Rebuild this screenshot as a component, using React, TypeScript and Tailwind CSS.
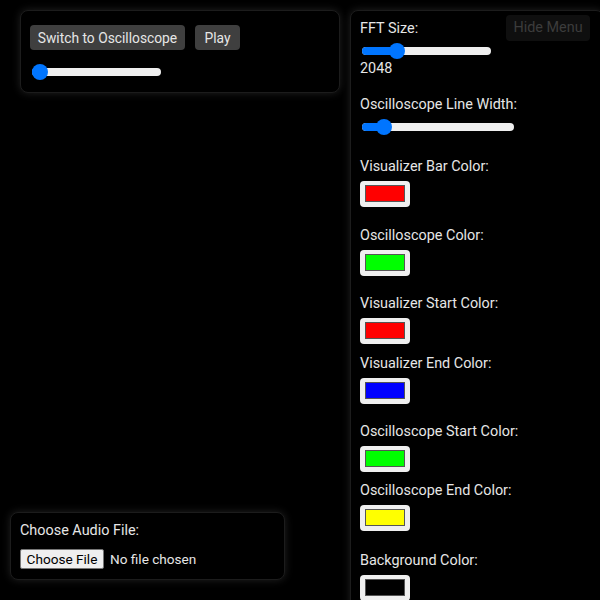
import React from "react";

const COLORS = [
  { label: "Visualizer Bar Color:", color: "#ff0000", gap: "mt-[22px]" },
  { label: "Oscilloscope Color:", color: "#00ff00", gap: "mt-[19px]" },
  { label: "Visualizer Start Color:", color: "#ff0000", gap: "mt-[18px]" },
  { label: "Visualizer End Color:", color: "#0000ff", gap: "mt-[10px]" },
  { label: "Oscilloscope Start Color:", color: "#00ff00", gap: "mt-[18px]" },
  { label: "Oscilloscope End Color:", color: "#ffff00", gap: "mt-[9px]" },
  { label: "Background Color:", color: "#000000", gap: "mt-[20px]" },
];

function Slider({ width, value }: { width: number; value: number }) {
  // value is 0..1, thumb is 16px
  const pos = value * (width - 16);
  return (
    <div className="relative h-4" style={{ width }}>
      <div className="absolute left-0 right-0 top-[4px] h-2 rounded-full bg-[#efefef]" />
      <div
        className="absolute left-0 top-[4px] h-2 rounded-l-full bg-[#0075ff]"
        style={{ width: pos + 8 }}
      />
      <div
        className="absolute top-0 size-4 rounded-full bg-[#0075ff]"
        style={{ left: pos }}
      />
    </div>
  );
}

function Swatch({ color }: { color: string }) {
  return (
    <div className="mt-[4px] h-[26px] w-[50px] rounded-[4px] bg-[#efefef] px-[5px] pb-[5px] pt-[4px]">
      <div
        className="h-full w-full border border-[#555]"
        style={{ backgroundColor: color }}
      />
    </div>
  );
}

const panel =
  "rounded-lg border border-[#1c1c1c] bg-black shadow-[0_0_8px_rgba(255,255,255,0.13)]";

export default function App() {
  return (
    <div className="flex h-[600px] w-[600px] overflow-hidden bg-black font-['Roboto',sans-serif] text-[14.4px] leading-5 text-[#e6e6e6]">
      {/* Left column */}
      <div className="flex w-[350px] shrink-0 flex-col justify-between">
        <div className={`${panel} ml-[20px] mt-[10px] h-[83px] w-[320px] px-[9px] pt-[14px]`}>
          <div className="flex gap-[10px]">
            <button className="h-[25px] w-[155px] rounded-[4px] bg-[#3f3f3f] text-[13.8px] text-[#e6e6e6]">
              Switch to Oscilloscope
            </button>
            <button className="h-[25px] w-[45px] rounded-[4px] bg-[#3f3f3f] text-[13.8px] text-[#e6e6e6]">
              Play
            </button>
          </div>
          <div className="ml-[2px] mt-[14px]">
            <Slider width={129} value={0} />
          </div>
        </div>

        <div className={`${panel} mb-[20px] ml-[10px] h-[68px] w-[275px] px-[9px] pt-[8px]`}>
          <div>Choose Audio File:</div>
          <div className="mt-[8px] flex items-center gap-[6px]">
            <span className="flex h-[20px] w-[84px] items-center justify-center rounded-[2px] border border-[#767676] bg-[#efefef] text-[13.6px] text-black">
              Choose File
            </span>
            <span className="text-[13.6px]">No file chosen</span>
          </div>
        </div>
      </div>

      {/* Right settings panel */}
      <div className={`${panel} relative mt-[10px] h-[620px] w-[254px] shrink-0 px-[9px] pt-[8px]`}>
        <button className="absolute left-[155px] top-[4px] h-[26px] w-[84px] rounded-[4px] bg-[#0f0f0f] text-[#3c3c3c]">
          Hide Menu
        </button>
        <div>FFT Size:</div>
        <div className="ml-[2px] mt-[4px]">
          <Slider width={129} value={0.24} />
        </div>
        <div>2048</div>
        <div className="mt-[16px]">Oscilloscope Line Width:</div>
        <div className="ml-[2px] mt-[4px]">
          <Slider width={152} value={0.1} />
        </div>
        {COLORS.map((c) => (
          <div key={c.label} className={c.gap}>
            <div>{c.label}</div>
            <Swatch color={c.color} />
          </div>
        ))}
      </div>
    </div>
  );
}
